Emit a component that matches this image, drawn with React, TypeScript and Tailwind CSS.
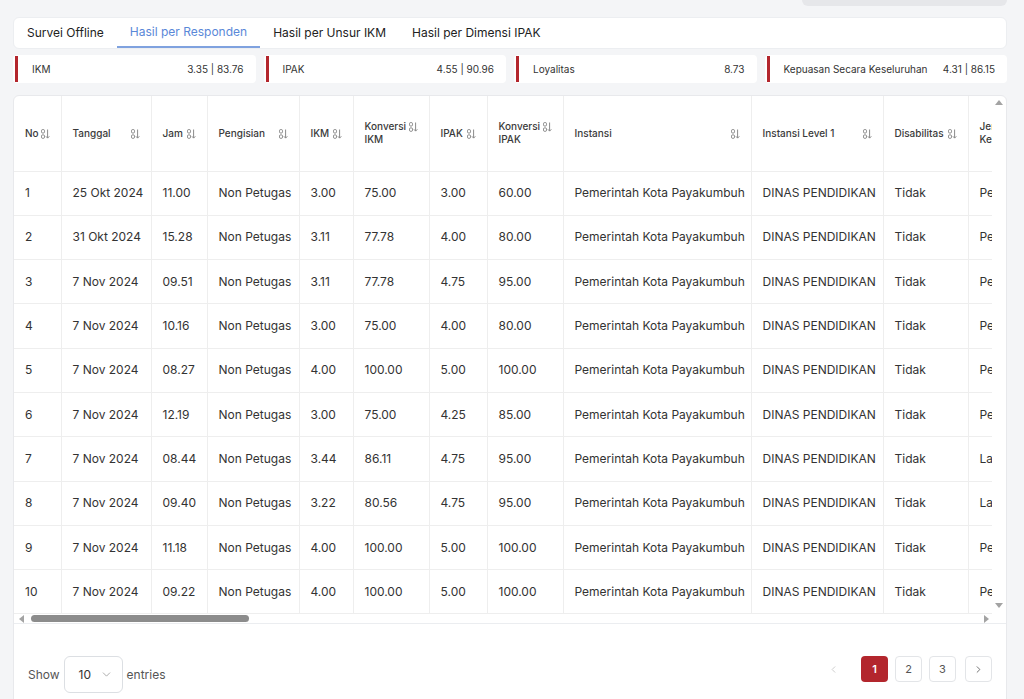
import React from "react";
import { ChevronDown, ChevronLeft, ChevronRight } from "lucide-react";

type Col = { h: string; cls: string };

const cols: Col[] = [
  { h: "No", cls: "w-[47px]" },
  { h: "Tanggal", cls: "w-[90px]" },
  { h: "Jam", cls: "w-[56px]" },
  { h: "Pengisian", cls: "w-[92px]" },
  { h: "IKM", cls: "w-[54px]" },
  { h: "Konversi IKM", cls: "w-[76px]" },
  { h: "IPAK", cls: "w-[58px]" },
  { h: "Konversi IPAK", cls: "w-[76px]" },
  { h: "Instansi", cls: "w-[188px]" },
  { h: "Instansi Level 1", cls: "w-[132px]" },
  { h: "Disabilitas", cls: "w-[85px]" },
  { h: "Jenis Kelamin", cls: "w-[70px]" },
  { h: "Usia", cls: "w-[70px]" },
  { h: "Pendidikan", cls: "w-[110px]" },
  { h: "Pekerjaan", cls: "w-[120px]" },
];

const rows: string[][] = [
  ["1", "25 Okt 2024", "11.00", "3.00", "75.00", "3.00", "60.00", "Perempuan"],
  ["2", "31 Okt 2024", "15.28", "3.11", "77.78", "4.00", "80.00", "Perempuan"],
  ["3", "7 Nov 2024", "09.51", "3.11", "77.78", "4.75", "95.00", "Perempuan"],
  ["4", "7 Nov 2024", "10.16", "3.00", "75.00", "4.00", "80.00", "Perempuan"],
  ["5", "7 Nov 2024", "08.27", "4.00", "100.00", "5.00", "100.00", "Perempuan"],
  ["6", "7 Nov 2024", "12.19", "3.00", "75.00", "4.25", "85.00", "Perempuan"],
  ["7", "7 Nov 2024", "08.44", "3.44", "86.11", "4.75", "95.00", "Laki-laki"],
  ["8", "7 Nov 2024", "09.40", "3.22", "80.56", "4.75", "95.00", "Laki-laki"],
  ["9", "7 Nov 2024", "11.18", "4.00", "100.00", "5.00", "100.00", "Perempuan"],
  ["10", "7 Nov 2024", "09.22", "4.00", "100.00", "5.00", "100.00", "Perempuan"],
];

function SortIcon() {
  return (
    <svg width="9" height="10" viewBox="0 0 9 10" fill="none" stroke="#8a8a8a" strokeWidth="1" className="mt-[2px] shrink-0">
      <rect x="0.5" y="0.5" width="3" height="3.6" rx="1.3" />
      <rect x="0.5" y="5.8" width="3" height="3.6" rx="1.3" />
      <path d="M6.6 0.5v8.6M4.9 7.3l1.7 1.8 1.7-1.8" />
    </svg>
  );
}

function Tri({ dir }: { dir: "up" | "down" | "left" | "right" }) {
  const pts =
    dir === "up" ? "0,5 4,0 8,5" : dir === "down" ? "0,0 8,0 4,5" : dir === "left" ? "5,0 5,8 0,4" : "0,0 0,8 5,4";
  const w = dir === "up" || dir === "down" ? 8 : 5;
  const h = dir === "up" || dir === "down" ? 5 : 8;
  return (
    <svg width={w} height={h} viewBox={`0 0 ${w} ${h}`}>
      <polygon points={pts} fill="#a3a3a3" />
    </svg>
  );
}

const stats = [
  { l: "IKM", v: "3.35 | 83.76" },
  { l: "IPAK", v: "4.55 | 90.96" },
  { l: "Loyalitas", v: "8.73" },
  { l: "Kepuasan Secara Keseluruhan", v: "4.31 | 86.15" },
];

const td = "border-r border-b border-[#eeeeee] pl-[11px] whitespace-nowrap overflow-hidden";

export default function App() {
  return (
    <div className="min-h-screen bg-[#f4f5f7] font-[Inter,sans-serif] text-[#333] pl-[13px] pr-[17px]">
      <div className="flex justify-end h-[17px]">
        <div className="w-[205px] h-[6px] bg-[#e6e7ea] rounded-b-lg" />
      </div>

      <div className="h-[32px] bg-white border border-[#eceef1] rounded-md flex items-stretch text-[12px]">
        <div className="px-[13px] flex items-center text-[#222]">Survei Offline</div>
        <div className="px-[13px] flex items-center text-[#5a88d8] border-b-2 border-[#7fa2df]">Hasil per Responden</div>
        <div className="px-[13px] flex items-center text-[#222]">Hasil per Unsur IKM</div>
        <div className="px-[13px] flex items-center text-[#222]">Hasil per Dimensi IPAK</div>
      </div>

      <div className="mt-[6px] grid grid-cols-4 gap-[8px] h-[28px] text-[10px] text-[#333]">
        {stats.map((s) => (
          <div key={s.l} className="bg-white rounded-sm flex items-center">
            <div className="ml-[2px] w-[3px] self-stretch my-[1px] bg-[#b3262d]" />
            <span className="ml-[14px] whitespace-nowrap">{s.l}</span>
            <span className="ml-auto pl-3 pr-3 whitespace-nowrap">{s.v}</span>
          </div>
        ))}
      </div>

      <div className="mt-[12px] bg-white border border-[#e8e9ec] rounded-md">
        <div className="flex">
          <div className="flex-1 min-w-0 h-[518px] overflow-hidden">
            <table className="table-fixed border-collapse w-[1324px]">
              <colgroup>
                {cols.map((c) => (
                  <col key={c.h} className={c.cls} />
                ))}
              </colgroup>
              <thead>
                <tr className="h-[75px]">
                  {cols.map((c) => (
                    <th key={c.h} className="border-r border-b border-[#eeeeee] px-[11px] text-left align-middle font-medium text-[10px] leading-[13px] text-[#3a3a3a]">
                      <div className="flex items-start justify-between gap-[2px]">
                        <span>{c.h}</span>
                        <SortIcon />
                      </div>
                    </th>
                  ))}
                </tr>
              </thead>
              <tbody className="text-[12px] text-[#333]">
                {rows.map((r) => (
                  <tr key={r[0]} className="h-[44.3px]">
                    <td className={td}>{r[0]}</td>
                    <td className={td}>{r[1]}</td>
                    <td className={td}>{r[2]}</td>
                    <td className={td}>Non Petugas</td>
                    <td className={td}>{r[3]}</td>
                    <td className={td}>{r[4]}</td>
                    <td className={td}>{r[5]}</td>
                    <td className={td}>{r[6]}</td>
                    <td className={td}>Pemerintah Kota Payakumbuh</td>
                    <td className={td}>DINAS PENDIDIKAN</td>
                    <td className={td}>Tidak</td>
                    <td className={td}>{r[7]}</td>
                    <td className={td}>36-45</td>
                    <td className={td}>S1</td>
                    <td className={td}>PNS</td>
                  </tr>
                ))}
              </tbody>
            </table>
          </div>
          <div className="w-[14px] h-[518px] flex flex-col items-center justify-between pt-[4px] pb-[6px]">
            <Tri dir="up" />
            <Tri dir="down" />
          </div>
        </div>
        <div className="flex h-[10px] border-b border-[#ebedf0]">
          <div className="flex-1 flex items-center pl-[5px] pr-[3px]">
            <Tri dir="left" />
            <div className="ml-[7px] w-[218px] h-[7px] rounded-full bg-[#8c8c8c]" />
            <div className="ml-auto">
              <Tri dir="right" />
            </div>
          </div>
          <div className="w-[14px]" />
        </div>

        <div className="flex items-start justify-between px-[14px] pt-[32px] pb-[12px]">
          <div className="flex items-center gap-[4px] text-[12px] text-[#555]">
            <span>Show</span>
            <div className="w-[59px] h-[37px] border border-[#dcdfe3] rounded-md flex items-center pl-[14px] pr-[9px] text-[#333]">
              <span>10</span>
              <ChevronDown size={13} strokeWidth={1.5} className="ml-auto text-[#9a9a9a]" />
            </div>
            <span>entries</span>
          </div>
          <div className="flex items-center gap-[7px] text-[11px]">
            <div className="w-[27px] h-[26px] mr-[7px] rounded flex items-center justify-center text-[#c4c4c4]">
              <ChevronLeft size={11} strokeWidth={1.8} />
            </div>
            <div className="w-[27px] h-[26px] rounded bg-[#b3262d] text-white font-semibold flex items-center justify-center">1</div>
            <div className="w-[27px] h-[26px] rounded border border-[#e3e5e8] text-[#555] flex items-center justify-center">2</div>
            <div className="w-[27px] h-[26px] rounded border border-[#e3e5e8] text-[#555] flex items-center justify-center">3</div>
            <div className="w-[27px] h-[26px] ml-[2px] rounded border border-[#e3e5e8] text-[#555] flex items-center justify-center">
              <ChevronRight size={11} strokeWidth={1.8} />
            </div>
          </div>
        </div>
      </div>
    </div>
  );
}
